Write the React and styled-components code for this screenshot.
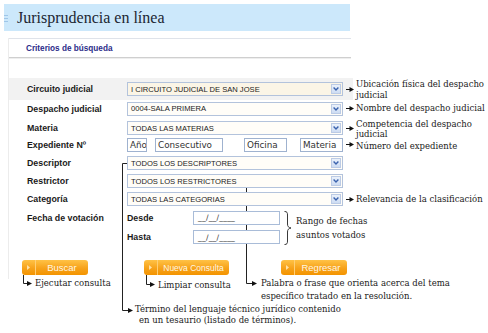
import React from 'react';
import styled, { createGlobalStyle } from 'styled-components';

const GlobalStyle = createGlobalStyle`
  html, body { margin: 0; padding: 0; background: #fff; }
  body { width: 488px; height: 333px; overflow: hidden; }
`;

const noteFont = `"DejaVu Serif", "Liberation Serif", serif`;

const Page = styled.div`
  position: relative;
  width: 488px;
  height: 333px;
  padding: 4px 0 0 4px;
  box-sizing: border-box;
  font-family: "Liberation Sans", Arial, sans-serif;
  color: #1b1b1b;
`;

const TitleBar = styled.div`
  width: 346px;
  height: 27px;
  background: #cce8fb;
  display: flex;
  align-items: center;
`;

const Grip = styled.span`
  width: 4px;
  height: 7px;
  margin: 1px 9px 0 0;
  background: repeating-linear-gradient(#9fc6e8 0 1px, transparent 1px 3px);
`;

const Title = styled.h1`
  margin: 0;
  font: 400 16px "Liberation Serif", "Times New Roman", serif;
  color: #202632;
`;

const Panel = styled.section`
  margin: 7px 0 0 4px;
  border-left: 1px solid #ececec;
  padding-bottom: 4px;
`;

const PanelHead = styled.div`
  width: 342px;
  height: 20px;
  box-sizing: border-box;
  border-top: 1px solid #dfe3ea;
  border-bottom: 1px solid #cfcfcf;
  box-shadow: 0 1px 0 #eeeeee;
  padding-left: 17px;
  display: flex;
  align-items: center;
  font-size: 8.2px;
  font-weight: 700;
  color: #2b2b88;
`;

const Form = styled.div`
  margin-top: 20px;
`;

const Row = styled.div`
  display: grid;
  grid-template-columns: 100px 216px 13px 1fr;
  align-items: center;
  height: ${({ $h }) => $h}px;
  padding-left: 18px;
  background: ${({ $band }) =>
    $band ? 'linear-gradient(#f2f2f2, #f2f2f2) no-repeat' : 'none'};
  background-size: 344px 100%;
`;

const Label = styled.div`
  font-size: 8.8px;
  font-weight: 700;
  color: #1a1a1a;
  white-space: nowrap;
`;

const Select = styled.div`
  height: 14px;
  box-sizing: border-box;
  border: 1px solid #b3c3dc;
  background: ${({ $cream }) => ($cream ? '#fbf5e6' : '#fffdf8')};
  display: flex;
  align-items: center;
  justify-content: space-between;
  padding-left: 3px;
  font-family: "Liberation Sans", Arial, sans-serif;
  font-size: 7.6px;
  color: #222;
  white-space: nowrap;
  position: relative;
  z-index: 1;
`;

const DropButton = styled.span`
  width: 10px;
  height: 10px;
  margin-right: 1px;
  background: linear-gradient(#eaf1fb, #cddcf3);
  border: 1px solid #bccbe5;
  box-sizing: border-box;
  display: flex;
  align-items: center;
  justify-content: center;
`;

const Chevron = () => (
  <svg width="6" height="4" viewBox="0 0 6 4">
    <path d="M0.6 0.6 L3 3 L5.4 0.6" fill="none" stroke="#3a62ad" strokeWidth="1.4" />
  </svg>
);

const ArrowCell = styled.span`
  display: flex;
  align-items: center;
  padding-left: 3px;
`;

const SmallArrow = () => (
  <svg width="8" height="5" viewBox="0 0 8 5">
    <path d="M0 2.5 H4" stroke="#111" strokeWidth="1" />
    <path d="M3.5 0 L8 2.5 L3.5 5 Z" fill="#111" />
  </svg>
);

const Note = styled.div`
  font-family: ${noteFont};
  font-size: 8.5px;
  line-height: ${({ $lh }) => $lh || 11}px;
  color: #1a1a1a;
  white-space: nowrap;
  align-self: ${({ $top }) => ($top !== undefined ? 'start' : 'center')};
  margin-top: ${({ $top }) => $top || 0}px;
  padding-left: ${({ $indent }) => $indent || 0}px;
`;

const ExpGroup = styled.div`
  display: flex;
  align-items: center;
`;

const ExpBox = styled.span`
  height: 14px;
  width: ${({ $w }) => $w}px;
  margin-left: ${({ $ml }) => $ml || 0}px;
  box-sizing: border-box;
  border: 1px solid #9fb2cf;
  background: #fff;
  display: flex;
  align-items: center;
  padding-left: 2px;
  font-family: "DejaVu Sans", Verdana, sans-serif;
  font-size: 8.8px;
  color: #333;
  white-space: nowrap;
  overflow: hidden;
`;

const DateBlock = styled.div`
  display: grid;
  grid-template-columns: 100px 66px 87px 1fr;
  grid-template-rows: 19px 20px;
  align-items: center;
  padding-left: 18px;
`;

const DateInput = styled.span`
  height: 14px;
  box-sizing: border-box;
  border: 1px solid #a9bcd8;
  background: #fff;
  display: flex;
  align-items: center;
  padding-left: 4px;
  font-family: "DejaVu Sans", Verdana, sans-serif;
  font-size: 7.5px;
  letter-spacing: 0.2px;
  color: #333;
  position: relative;
  z-index: 1;
`;

const RangeNote = styled.div`
  grid-row: 1 / span 2;
  grid-column: 4;
  display: flex;
  align-items: center;
  gap: 4px;
  padding-left: 4px;
  align-self: stretch;
`;

const Brace = () => (
  <svg width="8" height="34" viewBox="0 0 8 34">
    <path
      d="M0.5 0.5 C3 0.5 3.5 1.5 3.5 4 V13 C3.5 15.5 4.5 16.5 7 17 C4.5 17.5 3.5 18.5 3.5 21 V30 C3.5 32.5 3 33.5 0.5 33.5"
      fill="none"
      stroke="#222"
      strokeWidth="0.9"
    />
  </svg>
);

const ButtonRow = styled.div`
  display: flex;
  margin-top: 13px;
  padding-left: 18px;
`;

const OrangeButton = styled.button`
  width: ${({ $w }) => $w}px;
  height: 15px;
  margin-left: ${({ $ml }) => $ml || 0}px;
  padding: 0;
  border: none;
  border-radius: 3px;
  background: linear-gradient(#ffc246, #f7a21a 55%, #f39400);
  display: flex;
  align-items: center;
  font-family: "Liberation Sans", Arial, sans-serif;
  font-size: ${({ $fs }) => $fs || 9.5}px;
  color: #fff7e4;
`;

const ButtonCap = styled.span`
  width: 13px;
  height: 100%;
  border-right: 1px solid #ffcf75;
  display: flex;
  align-items: center;
  justify-content: center;
`;

const ButtonText = styled.span`
  flex: 1;
  text-align: center;
`;

const CapArrow = () => (
  <svg width="3" height="5" viewBox="0 0 3 5">
    <path d="M0 0 L3 2.5 L0 5 Z" fill="#ffe2a8" />
  </svg>
);

const Notes = styled.div`
  display: grid;
  grid-template-columns: ${({ $cols }) => $cols || '1fr'};
  align-items: start;
  padding-left: ${({ $pl }) => $pl}px;
  margin-top: ${({ $mt }) => $mt}px;
`;

const Overlay = styled.svg`
  position: absolute;
  left: 0;
  top: 0;
  pointer-events: none;
`;

const Head = ({ x, y }) => (
  <path d={`M${x - 5} ${y - 2.5} L${x} ${y} L${x - 5} ${y + 2.5} Z`} fill="#111" />
);

const Connectors = () => (
  <Overlay width="488" height="333" viewBox="0 0 488 333">
    <g fill="none" stroke="#222" strokeWidth="1">
      <path d="M127 163.5 H122.5 V310.5 H128" />
      <path d="M234 184.5 H246.5 V283.5 H252" />
      <path d="M23.5 275 V283.5 H28" />
      <path d="M146.5 275 V284.5 H151" />
    </g>
    <Head x={133} y={310.5} />
    <Head x={257} y={283.5} />
    <Head x={32} y={283.5} />
    <Head x={155} y={284.5} />
  </Overlay>
);

const selects = [
  { label: 'Circuito judicial', value: 'I CIRCUITO JUDICIAL DE SAN JOSE', h: 22, band: true, cream: true,
    note: ['Ubicación física del despacho', 'judicial'], top: 0.5 },
  { label: 'Despacho judicial', value: '0004-SALA PRIMERA', h: 17, note: ['Nombre del despacho judicial'] },
  { label: 'Materia', value: 'TODAS LAS MATERIAS', h: 18, note: ['Competencia del despacho', 'judicial'], top: 2, lh: 10 },
];

const lower = [
  { label: 'Descriptor', value: 'TODOS LOS DESCRIPTORES', h: 18 },
  { label: 'Restrictor', value: 'TODOS LOS RESTRICTORES', h: 18 },
  { label: 'Categoría', value: 'TODAS LAS CATEGORIAS', h: 18, note: ['Relevancia de la clasificación'] },
];

const SelectRow = ({ row }) => (
  <Row $h={row.h} $band={row.band}>
    <Label>{row.label}</Label>
    <Select $cream={row.cream}>
      {row.value}
      <DropButton>
        <Chevron />
      </DropButton>
    </Select>
    {row.note ? (
      <>
        <ArrowCell>
          <SmallArrow />
        </ArrowCell>
        <Note $top={row.top} $lh={row.lh}>
          {row.note.map((l) => (
            <div key={l}>{l}</div>
          ))}
        </Note>
      </>
    ) : null}
  </Row>
);

export default function App() {
  return (
    <Page>
      <GlobalStyle />
      <TitleBar>
        <Grip />
        <Title>Jurisprudencia en línea</Title>
      </TitleBar>
      <Panel>
        <PanelHead>Criterios de búsqueda</PanelHead>
        <Form>
          {selects.map((r) => (
            <SelectRow key={r.label} row={r} />
          ))}
          <Row $h={19}>
            <Label>Expediente Nº</Label>
            <ExpGroup>
              <ExpBox $w={20}>Año</ExpBox>
              <ExpBox $w={68} $ml={8}>Consecutivo</ExpBox>
              <ExpBox $w={43} $ml={21}>Oficina</ExpBox>
              <ExpBox $w={43} $ml={13}>Materia</ExpBox>
            </ExpGroup>
            <ArrowCell>
              <SmallArrow />
            </ArrowCell>
            <Note $top={6}>Número del expediente</Note>
          </Row>
          {lower.map((r) => (
            <SelectRow key={r.label} row={r} />
          ))}
          <DateBlock>
            <Label>Fecha de votación</Label>
            <Label>Desde</Label>
            <DateInput>__/__/____</DateInput>
            <RangeNote>
              <Brace />
              <Note $lh={14}>
                <div>Rango de fechas</div>
                <div>asuntos votados</div>
              </Note>
            </RangeNote>
            <span />
            <Label>Hasta</Label>
            <DateInput>__/__/____</DateInput>
          </DateBlock>
        </Form>
        <ButtonRow>
          <OrangeButton $w={66} $ml={-5}>
            <ButtonCap>
              <CapArrow />
            </ButtonCap>
            <ButtonText>Buscar</ButtonText>
          </OrangeButton>
          <OrangeButton $w={85} $ml={56} $fs={8.5}>
            <ButtonCap>
              <CapArrow />
            </ButtonCap>
            <ButtonText>Nueva Consulta</ButtonText>
          </OrangeButton>
          <OrangeButton $w={66} $ml={52}>
            <ButtonCap>
              <CapArrow />
            </ButtonCap>
            <ButtonText>Regresar</ButtonText>
          </OrangeButton>
        </ButtonRow>
      </Panel>
      <Notes $cols="123px 103px 1fr" $pl={31} $mt={-2}>
        <Note $top={0.5}>Ejecutar consulta</Note>
        <Note $top={2.5}>Limpiar consulta</Note>
        <Note $lh={13} $top={0}>
          <div>Palabra o frase que orienta acerca del tema</div>
          <div>específico tratado en la resolución.</div>
        </Note>
      </Notes>
      <Notes $pl={131} $mt={0}>
        <Note $lh={12} $top={0}>
          <div>Término del lenguaje técnico jurídico contenido</div>
          <Note as="div" $indent={4}>en un tesaurio (listado de términos).</Note>
        </Note>
      </Notes>
      <Connectors />
    </Page>
  );
}
